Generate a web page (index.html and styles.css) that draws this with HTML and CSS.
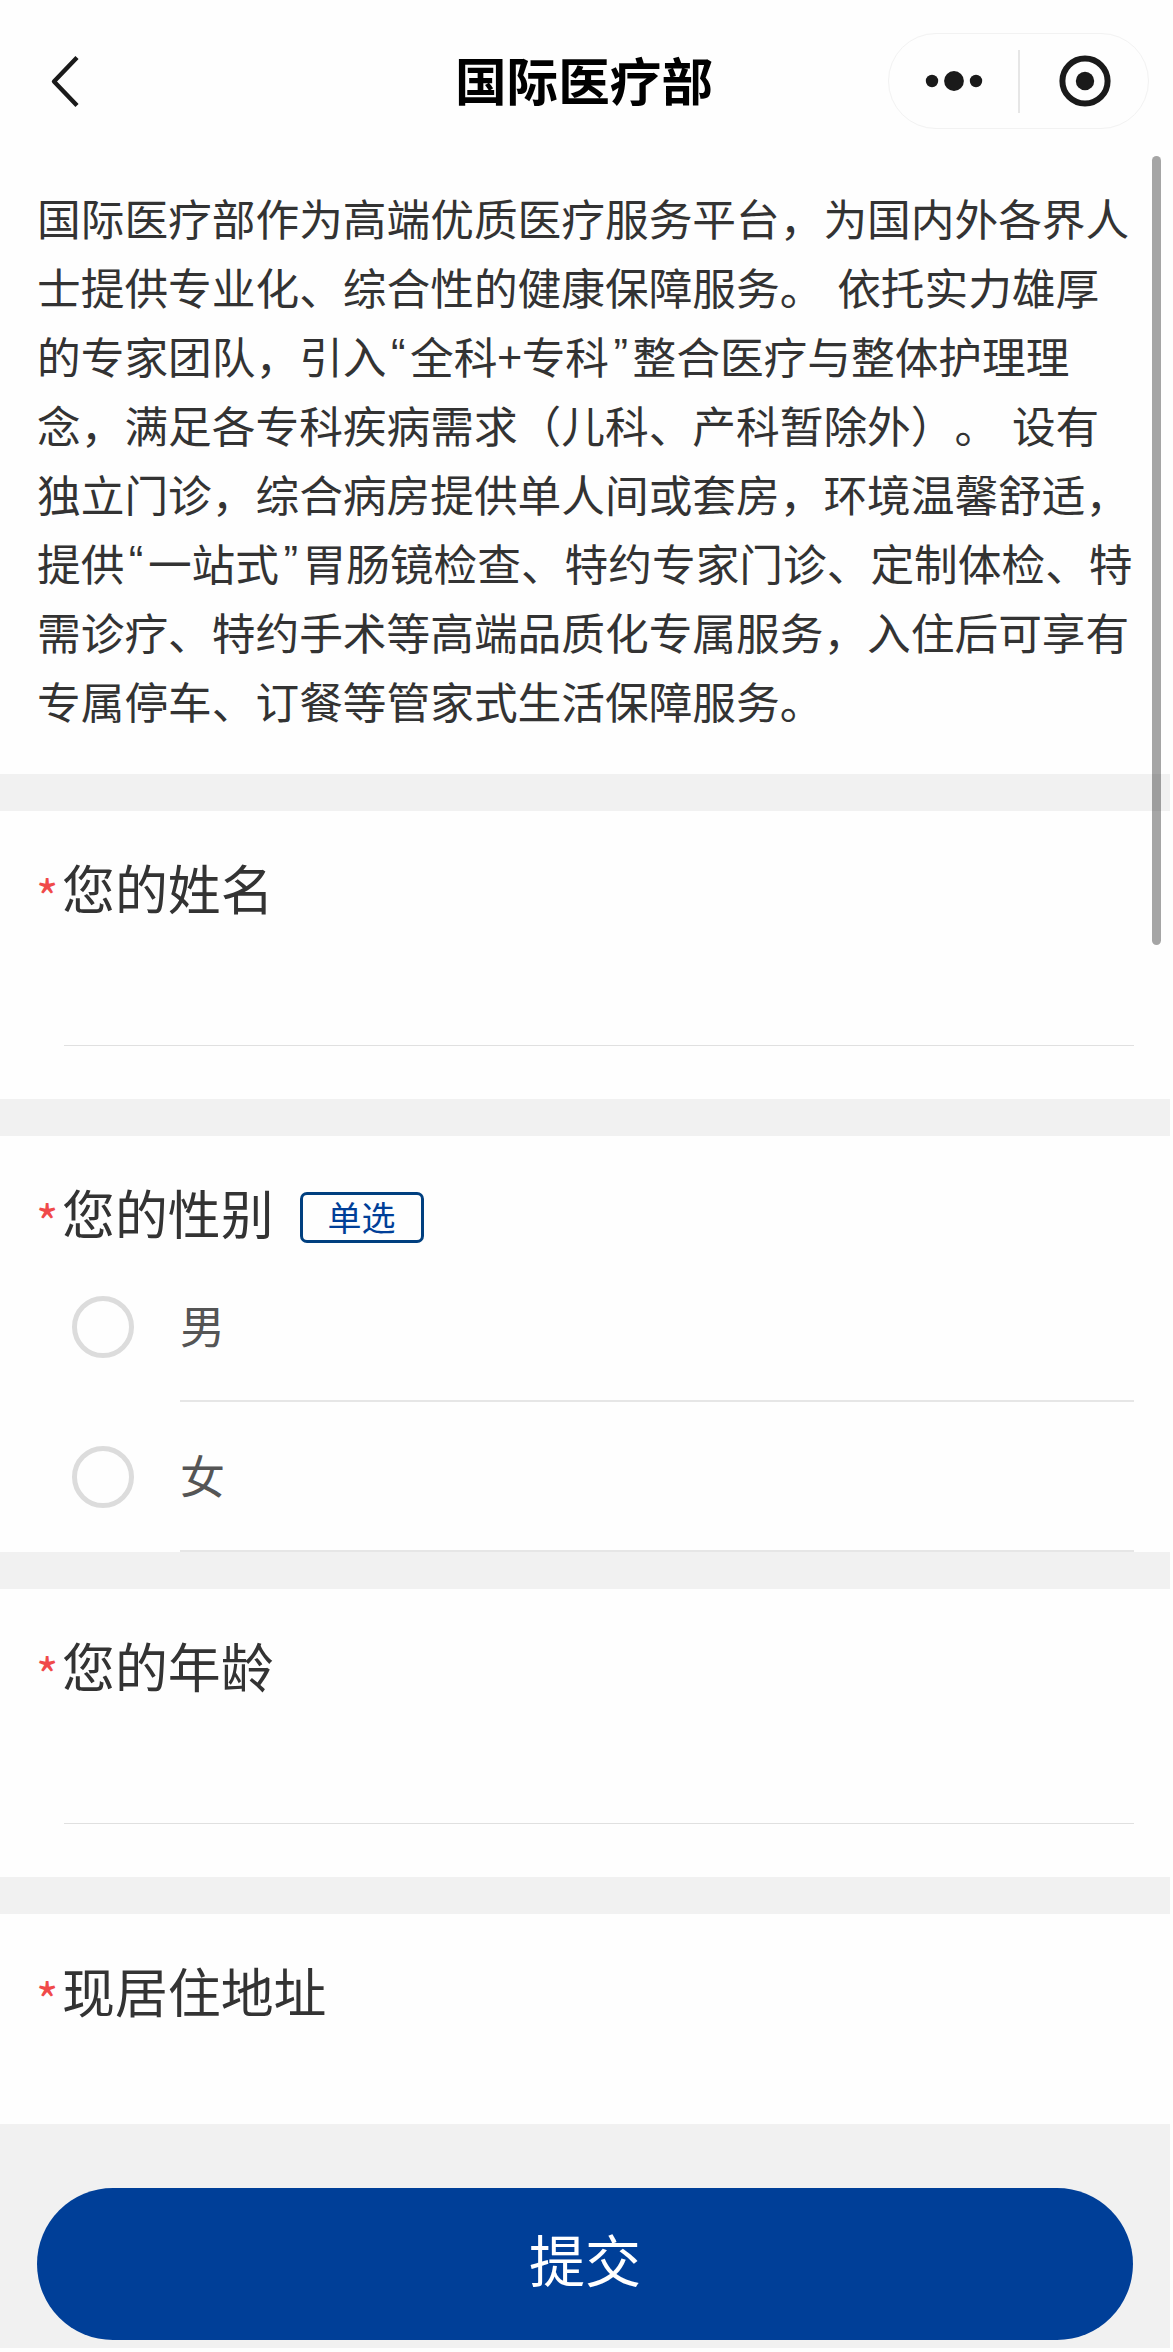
FILE: index.html
```html
<!DOCTYPE html>
<html lang="zh-CN">
<head>
  <meta charset="UTF-8">
  <meta name="viewport" content="width=device-width, initial-scale=1.0">
  <title>国际医疗部</title>
  <link rel="stylesheet" href="styles.css">
</head>
<body>

  <header class="navbar">
    <svg class="back" width="32" height="56" viewBox="0 0 32 56">
      <path d="M28 4.5 L5 28.5 L28 52.5" fill="none" stroke="#1a1a1a" stroke-width="4.4" stroke-linejoin="round"/>
    </svg>
    <h1>国际医疗部</h1>
    <div class="capsule">
      <svg width="58" height="20" viewBox="0 0 58 20" class="dots">
        <circle cx="7" cy="10" r="6.2"/>
        <circle cx="29" cy="10" r="9.9"/>
        <circle cx="51" cy="10" r="6.2"/>
      </svg>
      <span class="divider"></span>
      <svg width="52" height="52" viewBox="0 0 52 52" class="close">
        <circle cx="26" cy="26" r="22.6" fill="none" stroke="#1a1a1a" stroke-width="6"/>
        <circle cx="26" cy="26" r="9.2"/>
      </svg>
    </div>
  </header>

  <main>
    <p class="intro">国际医疗部作为高端优质医疗服务平台，为国内外各界人士提供专业化、综合性的健康保障服务。 依托实力雄厚的专家团队，引入<span class="q">“</span>全科+专科<span class="q">”</span>整合医疗与整体护理理念，满足各专科疾病需求（儿科、产科暂除外）。 设有独立门诊，综合病房提供单人间或套房，环境温馨舒适，提供<span class="q">“</span>一站式<span class="q">”</span>胃肠镜检查、特约专家门诊、定制体检、特需诊疗、特约手术等高端品质化专属服务，入住后可享有专属停车、订餐等管家式生活保障服务。</p>

    <form id="form">
      <section class="question">
        <label class="title" for="f_name"><span class="star">*</span>您的姓名</label>
        <input type="text" id="f_name" name="f_name">
      </section>

      <section class="question choice">
        <div class="title"><span class="star">*</span>您的性别<span class="tag">单选</span></div>
        <label class="option">
          <input type="radio" name="f_sex" value="1">
          <span>男</span>
        </label>
        <label class="option">
          <input type="radio" name="f_sex" value="2">
          <span>女</span>
        </label>
      </section>

      <section class="question">
        <label class="title" for="f_age"><span class="star">*</span>您的年龄</label>
        <input type="text" id="f_age" name="f_age">
      </section>

      <section class="question last">
        <div class="title"><span class="star">*</span>现居住地址</div>
      </section>

      <div class="footer">
        <button type="button" class="submit-btn">提交</button>
      </div>
    </form>
  </main>

  <div class="scrollbar"></div>

</body>
</html>
```
FILE: styles.css
```css
* {
  box-sizing: border-box;
}
html {
  background: #fefefe;
}
body {
  position: relative;
  width: 1170px;
  height: 2352px;
  margin: 0;
  overflow: hidden;
  color: #333;
  font-family: "Noto Sans CJK SC", sans-serif;
  text-spacing-trim: space-all;
}
.navbar {
  display: grid;
  grid-template-columns: 231px 1fr 261px;
  align-items: center;
  height: 162px;
  padding: 0 21px 0 49px;
}
.navbar h1 {
  margin: 0 0 4px;
  font-size: 51.6px;
  font-weight: 700;
  line-height: 60px;
  text-align: center;
  color: #000;
}
.capsule {
  display: flex;
  align-items: center;
  height: 96px;
  border: 1px solid #f2f2f2;
  border-radius: 48px;
}
.capsule svg {
  fill: #1a1a1a;
}
.dots {
  margin-left: 36px;
}
.divider {
  width: 2px;
  height: 63px;
  margin: 0 39px 0 35px;
  background: #e6e6e6;
}
.intro {
  width: 1136px;
  height: 612px;
  margin: 0;
  padding: 21px 0 0 37px;
  font-size: 43.7px;
  line-height: 69px;
  word-spacing: 4px;
}
/* half-width curly quotes */
.q {
  display: inline-block;
  width: 23.5px;
  font-family: "Liberation Sans", sans-serif;
  line-height: 1;
  text-align: center;
  vertical-align: 4px;
}
.question {
  height: 325px;
  padding: 41px 36px 0;
  border-top: 37px solid #f1f1f1;
}
.title {
  display: flex;
  align-items: center;
  height: 70px;
  font-size: 52.9px;
  line-height: 70px;
}
.star {
  width: 26px;
  padding-top: 15px;
  font-size: 48px;
  color: #f04a4a;
}
.question input[type="text"] {
  display: block;
  width: 1070px;
  height: 124px;
  margin-left: 28px;
  padding: 0;
  border: 0;
  border-bottom: 1px solid #e0e0e0;
  background: none;
  font-size: 45px;
  outline: none;
}
.choice {
  height: 453px;
}
.tag {
  width: 124px;
  height: 51px;
  margin: 10px 0 0 26px;
  border: 3px solid #003f7f;
  border-radius: 7px;
  font-size: 34px;
  line-height: 44px;
  text-align: center;
  color: #003f98;
}
.option {
  display: flex;
  align-items: center;
  height: 150px;
  padding-left: 36px;
}
.title + .option {
  margin-top: 5px;
}
.option input {
  appearance: none;
  width: 62px;
  height: 62px;
  margin: 0;
  border: 5px solid #dcdcdc;
  border-radius: 50%;
}
.option span {
  flex: 1;
  height: 150px;
  margin-left: 46px;
  border-bottom: 2px solid #e6e6e6;
  font-size: 45px;
  line-height: 146px;
  color: #555;
}
.last {
  height: 247px;
}
.footer {
  height: 224px;
  padding: 64px 37px 0;
  background: #f1f1f1;
}
.submit-btn {
  display: block;
  width: 100%;
  height: 152px;
  padding: 0 0 13px;
  border: 0;
  border-radius: 76px;
  background: #003f98;
  color: #fff;
  font-family: inherit;
  font-size: 56px;
}
.scrollbar {
  position: absolute;
  top: 156px;
  left: 1152px;
  width: 9px;
  height: 789px;
  border-radius: 5px;
  background: rgba(0, 0, 0, 0.35);
}
```
